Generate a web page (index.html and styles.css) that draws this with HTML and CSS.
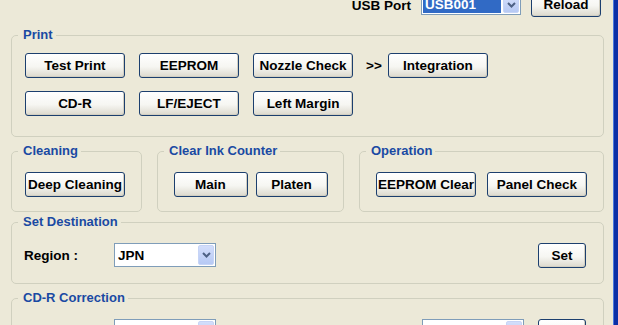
FILE: index.html
```html
<!DOCTYPE html>
<html>
    <head>
        <title>Adjustment Program</title>
        <meta charset="utf-8">
        <link rel="stylesheet" href="styles.css">
    </head>

    <body>
        <div class="window">
            <div class="topbar">
                <span class="label">USB Port</span>
                <div class="combo combo_port">
                    <span class="combo_text selected">USB001</span>
                    <span class="combo_arrow"><svg width="9" height="6" viewBox="0 0 9 6"><path d="M1 1 L4.5 4.5 L8 1" fill="none" stroke="#4d6185" stroke-width="2"/></svg></span>
                </div>
                <button class="btn btn_reload">Reload</button>
            </div>

            <fieldset class="group group_print">
                <legend>Print</legend>
                <div class="rows">
                    <div class="row">
                        <button class="btn">Test Print</button>
                        <button class="btn">EEPROM</button>
                        <button class="btn">Nozzle Check</button>
                        <span class="more">&gt;&gt;</span>
                        <button class="btn">Integration</button>
                    </div>
                    <div class="row">
                        <button class="btn">CD-R</button>
                        <button class="btn">LF/EJECT</button>
                        <button class="btn">Left Margin</button>
                    </div>
                </div>
            </fieldset>

            <div class="triple">
                <fieldset class="group group_clean">
                    <legend>Cleaning</legend>
                    <div class="row">
                        <button class="btn">Deep Cleaning</button>
                    </div>
                </fieldset>
                <fieldset class="group group_ink">
                    <legend>Clear Ink Counter</legend>
                    <div class="row centered">
                        <button class="btn btn_main">Main</button>
                        <button class="btn btn_platen">Platen</button>
                    </div>
                </fieldset>
                <fieldset class="group group_op">
                    <legend>Operation</legend>
                    <div class="row centered">
                        <button class="btn">EEPROM Clear</button>
                        <button class="btn">Panel Check</button>
                    </div>
                </fieldset>
            </div>

            <fieldset class="group group_dest">
                <legend>Set Destination</legend>
                <div class="row form_row">
                    <span class="label field_label">Region :</span>
                    <div class="combo">
                        <span class="combo_text">JPN</span>
                        <span class="combo_arrow"><svg width="9" height="6" viewBox="0 0 9 6"><path d="M1 1 L4.5 4.5 L8 1" fill="none" stroke="#4d6185" stroke-width="2"/></svg></span>
                    </div>
                    <span class="spacer"></span>
                    <button class="btn btn_small">Set</button>
                </div>
            </fieldset>

            <fieldset class="group group_cdr">
                <legend>CD-R Correction</legend>
                <div class="row form_row">
                    <span class="label field_label">Value :</span>
                    <div class="combo">
                        <span class="combo_text">0</span>
                        <span class="combo_arrow"><svg width="9" height="6" viewBox="0 0 9 6"><path d="M1 1 L4.5 4.5 L8 1" fill="none" stroke="#4d6185" stroke-width="2"/></svg></span>
                    </div>
                    <span class="spacer"></span>
                    <div class="combo">
                        <span class="combo_text">0</span>
                        <span class="combo_arrow"><svg width="9" height="6" viewBox="0 0 9 6"><path d="M1 1 L4.5 4.5 L8 1" fill="none" stroke="#4d6185" stroke-width="2"/></svg></span>
                    </div>
                    <button class="btn btn_small btn_after">Set</button>
                </div>
            </fieldset>
        </div>
        <div class="frame"></div>
    </body>
</html>
```

FILE: styles.css
```css
body {
    margin: 0;
    height: 325px;
    overflow: hidden;
    display: flex;
    background-color: #ece9d8;
    font-family: "Liberation Sans", Arial, sans-serif;
    color: #000;
}

.window {
    flex: 1;
    padding: 0 9px 0 11px;
}

.frame {
    width: 5px;
    background: linear-gradient(to right, #4a78dc 0, #4a78dc 1px, #0b2fa6 1px);
}

.topbar {
    display: flex;
    align-items: center;
    justify-content: flex-end;
    height: 25px;
    margin-top: -8px;
    padding-right: 3px;
    gap: 10px;
}

.topbar .label {
    padding-top: 2px;
}

.label {
    font-weight: bold;
    font-size: 13.5px;
}

/* buttons */
.btn {
    font: bold 13.5px "Liberation Sans", Arial, sans-serif;
    color: #000;
    width: 100px;
    height: 25px;
    padding: 0;
    border: 1px solid #1c3f6e;
    border-radius: 3px;
    background: linear-gradient(#ffffff, #f6f6f2 55%, #dcd9cd);
    box-shadow: inset -1px -1px 0 #d2cfc2;
    white-space: nowrap;
}

.btn_reload {
    width: 70px;
}

.btn_main {
    width: 74px;
}

.btn_platen {
    width: 72px;
}

.btn_small {
    width: 48px;
}

/* combo boxes */
.combo {
    display: flex;
    align-items: center;
    width: 102px;
    height: 24px;
    box-sizing: border-box;
    border: 1px solid #7f9db9;
    background: white;
    padding: 1px;
}

.combo_text {
    flex: 1;
    align-self: stretch;
    display: flex;
    align-items: center;
    padding-left: 2px;
    font-weight: bold;
    font-size: 13.5px;
}

.combo_text.selected {
    background: #316ac5;
    color: white;
    margin-right: 2px;
}

.combo_arrow {
    width: 16px;
    align-self: stretch;
    display: flex;
    align-items: center;
    justify-content: center;
    border: 1px solid #c6d4f6;
    border-radius: 2px;
    background: linear-gradient(#d3defb, #b6c9f4);
    box-sizing: border-box;
}

.combo_port {
    width: 100px;
    height: 21px;
}

/* group boxes */
.group {
    margin: 0;
    padding: 0;
    min-width: 0;
    border: 1px solid #d0d0bf;
    border-radius: 5px;
}

.group legend {
    margin-left: 6px;
    padding: 0 3px 0 5px;
    font-weight: bold;
    font-size: 13px;
    line-height: 16px;
    color: #1a4aa3;
}

.row {
    display: flex;
    align-items: center;
    gap: 14px;
}

.rows {
    display: flex;
    flex-direction: column;
    gap: 13px;
    padding-left: 13px;
}

.centered {
    justify-content: center;
}

.more {
    font-weight: bold;
    font-size: 13.5px;
    margin-left: -1px;
    margin-right: -8px;
}

.group_print {
    margin-top: 10px;
    padding: 10px 0 20px 0;
}

.triple {
    display: flex;
    gap: 15px;
    margin-top: 6px;
}

.triple .group {
    padding: 13px 0 14px 0;
}

.group_clean {
    width: 131px;
    box-sizing: border-box;
}

.group_clean .row {
    padding-left: 13px;
}

.group_ink {
    width: 187px;
    box-sizing: border-box;
}

.group_ink .row {
    gap: 8px;
}

.group_op {
    flex: 1;
}

.group_op .row {
    gap: 11px;
}

.group_dest {
    margin-top: 2px;
    padding: 12px 17px 15px 0;
}

.form_row {
    height: 26px;
    gap: 0;
    padding-left: 12px;
}

.field_label {
    width: 90px;
}

.spacer {
    flex: 1;
}

.group_cdr {
    margin-top: 6px;
    padding: 12px 17px 15px 0;
}

.btn_after {
    margin-left: 14px;
}
```
